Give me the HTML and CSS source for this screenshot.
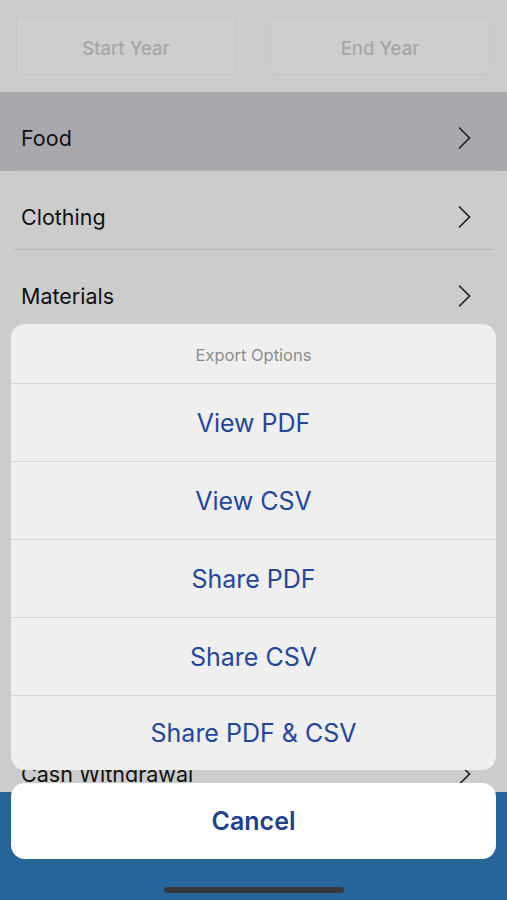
FILE: index.html
```html
<!DOCTYPE html>
<html lang="en">
<head>
    <meta charset="UTF-8">
    <meta name="viewport" content="width=device-width, initial-scale=1.0">
    <title>Export Options</title>
    <link rel="stylesheet" href="styles.css">
</head>
<body>
    <div class="screen">
        <div class="filters">
            <div class="yearInput">Start Year</div>
            <div class="yearInput">End Year</div>
        </div>
        <ul class="categoryList">
            <li class="row selected"><span>Food</span><svg class="chevron" viewBox="0 0 14 24"><path d="M2 1.5 L12.5 12 L2 22.5"/></svg></li>
            <li class="row"><span>Clothing</span><svg class="chevron" viewBox="0 0 14 24"><path d="M2 1.5 L12.5 12 L2 22.5"/></svg></li>
            <li class="row"><span>Materials</span><svg class="chevron" viewBox="0 0 14 24"><path d="M2 1.5 L12.5 12 L2 22.5"/></svg></li>
            <li class="spacer"></li>
            <li class="row lastRow"><span>Cash Withdrawal</span><svg class="chevron" viewBox="0 0 14 24"><path d="M2 1.5 L12.5 12 L2 22.5"/></svg></li>
        </ul>
        <div class="tabBar"></div>

        <!-- action sheet over the dimmed page -->
        <div class="actionSheet">
            <div class="sheetGroup">
                <div class="sheetTitle">Export Options</div>
                <button class="sheetBtn">View PDF</button>
                <button class="sheetBtn">View CSV</button>
                <button class="sheetBtn">Share PDF</button>
                <button class="sheetBtn">Share CSV</button>
                <button class="sheetBtn">Share PDF &amp; CSV</button>
            </div>
            <button class="cancelBtn">Cancel</button>
        </div>
        <div class="homeIndicator"></div>
    </div>
</body>
</html>
```

FILE: styles.css
```css
*{margin: 0; padding: 0; box-sizing: border-box; list-style: none; font-family: Inter, "Noto Sans", sans-serif;}
body{background-color: #cccccc; width: 507px; height: 900px; overflow: hidden;}
.screen{width: 507px; height: 900px; position: relative; display: flex; flex-direction: column; overflow: hidden;}

.filters{height: 92px; display: flex; gap: 34px; padding: 17px 17px 0 16px; border-bottom: 1px solid #c6c6c6;}
.yearInput{width: 220px; height: 58px; padding-top: 3px; border: 1px solid #c4c4c4; border-radius: 4px; background-color: #cecece; color: #a6a6a6; font-size: 18.5px; font-weight: 500; display: flex; align-items: center; justify-content: center;}

.categoryList{flex: 1; display: flex; flex-direction: column; min-height: 0;}
.row{height: 79px; flex-shrink: 0; display: flex; align-items: center; justify-content: space-between; padding: 12px 36px 0 21px; font-size: 21.5px; color: #111; position: relative;}
.row + .row::before{content: ""; position: absolute; top: -1px; left: 14px; right: 13px; height: 1px; background-color: #b3b3b3;}
.selected{background-color: #a9a8ad;}
.chevron{width: 14px; height: 24px; fill: none; stroke: #222; stroke-width: 1.7;}
.spacer{flex: 1;}
.lastRow{margin-bottom: -15px;}

.tabBar{height: 108px; background-color: #27649a; position: relative;}

.actionSheet{position: absolute; left: 11px; right: 11px; bottom: 41px; display: flex; flex-direction: column; gap: 13px;}
.sheetGroup{background-color: #efefef; border-radius: 14px; overflow: hidden; display: flex; flex-direction: column;}
.sheetTitle{height: 59px; padding-top: 2px; display: flex; align-items: center; justify-content: center; font-size: 16.5px; color: #8c8c8c;}
.sheetBtn{height: 78px; border: none; border-top: 1px solid #d5d5d5; background: none; font-size: 25px; color: #24479b; display: flex; align-items: center; justify-content: center;}
.sheetBtn:last-child{height: 75px;}
.cancelBtn{height: 76px; border: none; border-radius: 14px; background-color: #fff; font-size: 25px; font-weight: 600; color: #1f3f8f;}

.homeIndicator{position: absolute; left: 164px; bottom: 7px; width: 180px; height: 6px; border-radius: 3px; background-color: #36383b;}
```
